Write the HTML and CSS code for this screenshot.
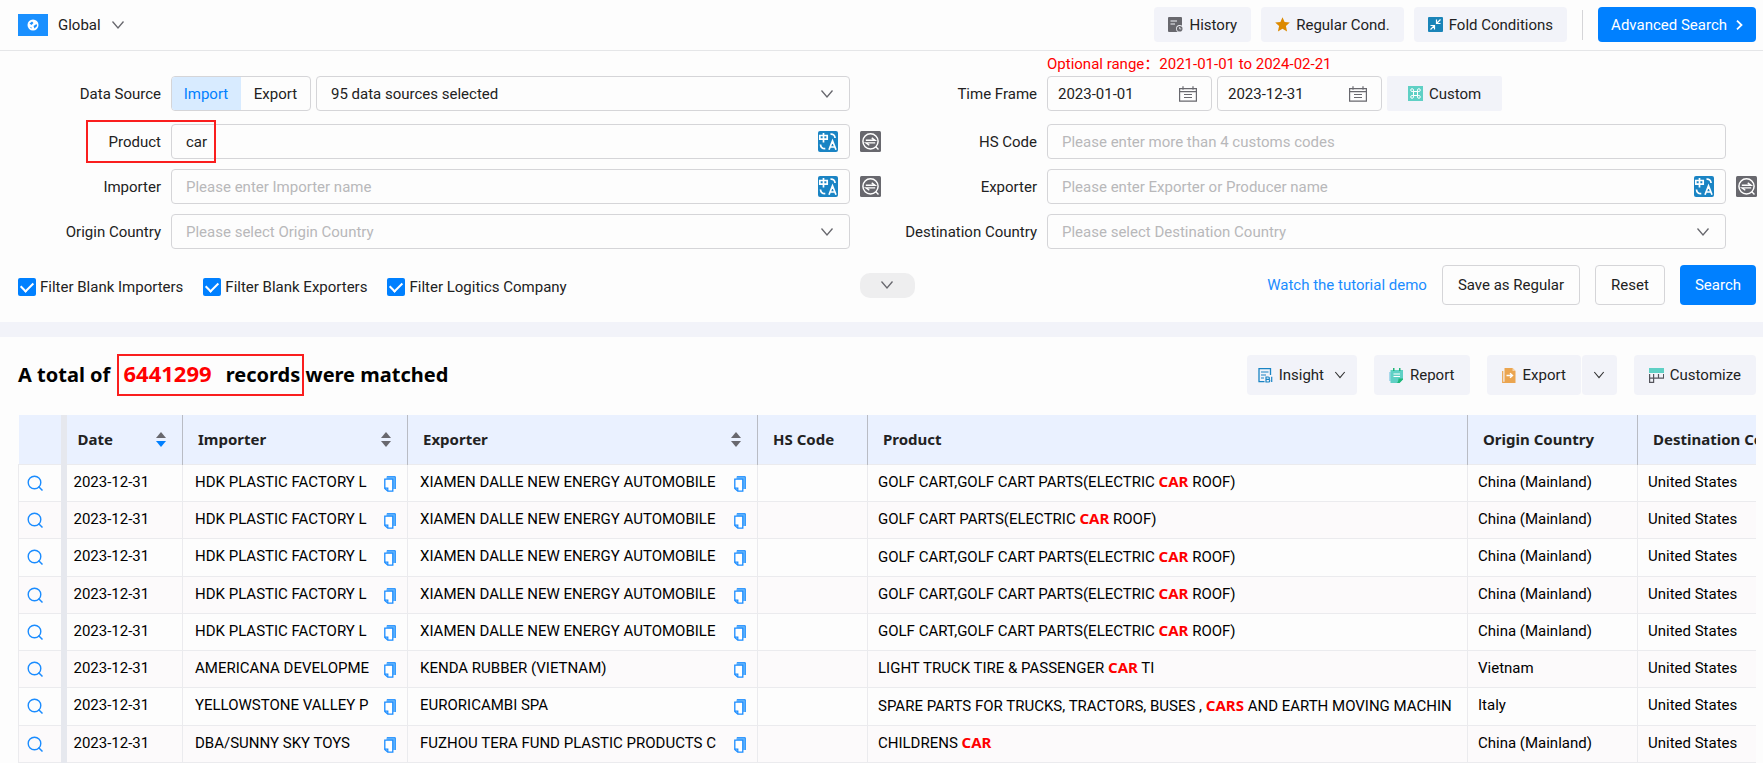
FILE: index.html
```html
<!DOCTYPE html>
<html lang="en">
<head>
<meta charset="utf-8">
<title>Trade records search</title>
<link rel="stylesheet" href="styles.css">
</head>
<body>
<svg class="defs" aria-hidden="true">
  <symbol id="i-chev" viewBox="0 0 14 14"><path d="M1.500 3.500 7 10l5.500-6.500" fill="none" stroke="currentColor" stroke-width="1.300"/></symbol>
  <symbol id="i-trans" viewBox="0 0 20 21"><rect width="20" height="21" rx="2" fill="#1a84c4"/><path d="M1.800 4.500h7.400v3.700H1.800zM5.500 2v9.500M12.500 3.200c2.500-.3 4.300 1 4.600 3.800M2.500 13.500c.2 3 2 4.300 4.800 4.200M11 18.800l3.500-9 3.500 9M12.300 16h4.500" fill="none" stroke="#fff" stroke-width="1.700"/></symbol>
  <symbol id="i-zoom" viewBox="0 0 21 21"><rect width="21" height="21" rx="1.500" fill="#68686e"/><circle cx="10.500" cy="10.300" r="7.600" fill="none" stroke="#fff" stroke-width="1.500"/><path d="M15.800 15.800l2.700 2.700M5.800 9.300H15L11.700 6.900M15.200 11.900H6l3.300 2.400" fill="none" stroke="#fff" stroke-width="1.400"/></symbol>
  <symbol id="i-cal" viewBox="0 0 18 16"><path d="M.6 2.600h16.800v12.500H.6zM.6 5.600h16.800M4 .2v3.500M14 .2v3.500M5 8.500h8M5 11.500h8" fill="none" stroke="#68686e" stroke-width="1.200"/></symbol>
  <symbol id="i-search" viewBox="0 0 16 16"><circle cx="7.500" cy="7.500" r="6.300" fill="none" stroke="#1a8cff" stroke-width="1.400"/><path d="M11.500 11.500l4 4" stroke="#1a8cff" stroke-width="1.500"/></symbol>
  <symbol id="i-copy" viewBox="0 0 12 16"><path d="M2.500 .5h9v12.500h-2.500V3h-6.500z" fill="#6cb8fa"/><path d="M3 .7h8.300v12.300" fill="none" stroke="#1a8cff" stroke-width="1"/><path d="M.8 3.200h8v12H3.800L.8 12.500z" fill="#fff" stroke="#1a8cff" stroke-width="1.300"/><path d="M.8 12.200h3v2.800" fill="none" stroke="#1a8cff" stroke-width="1.200"/></symbol>
  <symbol id="i-sort" viewBox="0 0 10 15"><path d="M0 6l5-6 5 6z" fill="#68686e"/><path d="M0 9l5 6 5-6z" fill="currentColor"/></symbol>
</svg>
<header class="topbar">
  <button class="region"><svg class="flag" viewBox="0 0 30 22"><rect width="30" height="22" fill="#1a90ff"/><circle cx="15" cy="11" r="5.500" fill="#fff"/><path d="M11.500 9.500l2.500-2 1.500 1.500-2 2zM15.500 12l3-2 .6 2-2.600 2.500zM12 13l1.500.3v1.500z" fill="#1a90ff"/></svg>Global<svg class="chev"><use href="#i-chev"/></svg></button>
  <div class="tools">
    <button class="soft"><svg class="ico" viewBox="0 0 15 15"><rect width="14" height="15" rx="1" fill="#68686e"/><path d="M2.500 4h6.500M2.500 7h4.500" stroke="#f2f3f9" stroke-width="1.200"/><circle cx="11.700" cy="11.700" r="3.600" fill="#f2f3f9"/><circle cx="11.700" cy="11.700" r="2.800" fill="#68686e"/><path d="M11.700 10v1.900h1.600" fill="none" stroke="#f2f3f9" stroke-width=".8"/></svg>History</button>
    <button class="soft"><svg class="ico" viewBox="0 0 15 15"><path d="M7.500.2l2.100 4.700 5.200.5-3.900 3.500 1.200 5.600-4.600-2.700-4.600 2.700 1.200-5.600L.2 5.400l5.200-.5z" fill="#dd8a00"/></svg>Regular Cond.</button>
    <button class="soft"><svg class="ico" viewBox="0 0 15 15"><rect width="15" height="15" rx="1" fill="#1a84b8"/><path d="M12.500 2.500 9 6M8.500 2.500v4h4M2.500 12.500 6 9M2.500 8.500h4v4" fill="none" stroke="#fff" stroke-width="1.200"/></svg>Fold Conditions</button>
    <span class="rule"></span>
    <button class="solid">Advanced Search<svg class="right" viewBox="0 0 7 10"><path d="M1 .7 5.500 5 1 9.300" fill="none" stroke="#fff" stroke-width="1.800"/></svg></button>
  </div>
</header>
<form class="filters">
  <div class="grid">
    <div class="field">
      <span class="label">Data Source</span>
      <div class="control split">
        <div class="toggle"><button type="button" class="on">Import</button><button type="button">Export</button></div>
        <div class="box grow"><select aria-label="Sources"><option>95 data sources selected</option></select><svg class="chev"><use href="#i-chev"/></svg></div>
      </div>
    </div>
    <div class="field">
      <label class="label" for="from">Time Frame</label>
      <div class="control split dates">
        <p class="range">Optional range：2021-01-01 to 2024-02-21</p>
        <div class="box date"><input id="from" value="2023-01-01"><svg class="cal"><use href="#i-cal"/></svg></div>
        <div class="box date"><input aria-label="End date" value="2023-12-31"><svg class="cal"><use href="#i-cal"/></svg></div>
        <button type="button" class="soft custom"><svg class="ico" viewBox="0 0 15 15"><rect width="15" height="15" fill="#5fd0c5"/><path d="M5.500 5.500h4v4h-4zM5.500 5.500h-1.400a1.400 1.400 0 1 1 1.400-1.400zM9.500 5.500V4.100a1.400 1.400 0 1 1 1.400 1.400zM9.500 9.500h1.400a1.400 1.400 0 1 1-1.400 1.400zM5.500 9.500v1.400a1.400 1.400 0 1 1-1.400-1.400z" fill="none" stroke="#fff"/></svg>Custom</button>
      </div>
    </div>
    <div class="field">
      <label class="label" for="product">Product</label>
      <div class="box control"><input id="product" value="car"><svg class="trans"><use href="#i-trans"/></svg></div>
      <button type="button" class="lens" aria-label="Match mode"><svg><use href="#i-zoom"/></svg></button>
      <span class="mark"></span>
    </div>
    <div class="field">
      <label class="label" for="hs">HS Code</label>
      <div class="box control"><input id="hs" placeholder="Please enter more than 4 customs codes"></div>
    </div>
    <div class="field">
      <label class="label" for="importer">Importer</label>
      <div class="box control"><input id="importer" placeholder="Please enter Importer name"><svg class="trans"><use href="#i-trans"/></svg></div>
      <button type="button" class="lens" aria-label="Match mode"><svg><use href="#i-zoom"/></svg></button>
    </div>
    <div class="field">
      <label class="label" for="exporter">Exporter</label>
      <div class="box control"><input id="exporter" placeholder="Please enter Exporter or Producer name"><svg class="trans"><use href="#i-trans"/></svg></div>
      <button type="button" class="lens" aria-label="Match mode"><svg><use href="#i-zoom"/></svg></button>
    </div>
    <div class="field">
      <label class="label" for="origin">Origin Country</label>
      <div class="box control"><select id="origin" class="empty"><option>Please select Origin Country</option></select><svg class="chev"><use href="#i-chev"/></svg></div>
    </div>
    <div class="field">
      <label class="label" for="dest">Destination Country</label>
      <div class="box control"><select id="dest" class="empty"><option>Please select Destination Country</option></select><svg class="chev"><use href="#i-chev"/></svg></div>
    </div>
  </div>
  <div class="actions">
    <div class="checks">
      <label><input type="checkbox" checked>Filter Blank Importers</label>
      <label><input type="checkbox" checked>Filter Blank Exporters</label>
      <label><input type="checkbox" checked>Filter Logitics Company</label>
    </div>
    <button type="button" class="more" aria-label="More conditions"><svg class="chev"><use href="#i-chev"/></svg></button>
    <div class="submit">
      <a href="#">Watch the tutorial demo</a>
      <button type="button" class="line">Save as Regular</button>
      <button type="button" class="line">Reset</button>
      <button type="button" class="solid">Search</button>
    </div>
  </div>
</form>
<main class="results">
  <div class="summary">
    <h1>A total of <span class="hit"><em>6441299</em> records</span> were matched</h1>
    <div class="exports">
      <button class="soft insight"><svg class="ico" viewBox="0 0 15 15"><path d="M12.500 7V.7H1v13h5.500" fill="none" stroke="#1a84c4" stroke-width="1.300"/><path d="M3 4h7.500M3 7h5M3 10h3" stroke="#1a84c4" stroke-width="1.200"/><path d="M8 9h2.200c1.600 0 1.600 2.300 0 2.300H8zm0 2.300h2.500c1.700 0 1.700 2.700 0 2.700H8zM13.700 8.700V14" fill="none" stroke="#1a84c4" stroke-width="1.200"/></svg>Insight<svg class="tiny"><use href="#i-chev"/></svg></button>
      <button class="soft"><svg class="ico" viewBox="0 0 15 15"><path d="M0 4h3v9H0z" fill="#a9d8ec"/><path d="M1.500 2h12.500v9l-3.500 4h-9z" fill="#5fd0c5"/><path d="M14 10.500v1L10.500 15H7.500c2 0 2-4.500 2-4.500zM4 0h1.500v3H4zM10 0h1.500v3H10z" fill="#1fb87a"/><path d="M4.500 6h6.500M4.500 8.500h6.500" stroke="#fff" stroke-width="1.200"/></svg>Report</button>
      <div class="pair"><button class="soft"><svg class="ico" viewBox="0 0 15 15"><path d="M2.500 0h8l3 3v12h-11z" fill="#eba550"/><path d="M10.500 0l3 3h-3z" fill="#f8d3a4"/><path d="M.7 3v11.400h10" fill="none" stroke="#eba550" stroke-width="1.200"/><path d="M4.500 7.500h5.500M8 5.300l2.500 2.200L8 9.700" fill="none" stroke="#fff" stroke-width="1.400"/></svg>Export</button><button class="soft drop" aria-label="Export options"><svg class="tiny"><use href="#i-chev"/></svg></button></div>
      <button class="soft"><svg class="ico" viewBox="0 0 15 15"><rect width="15" height="5" fill="#5fd0c5"/><path d="M.6 6v8.400h4V6M.6 10.200h14V6M9.500 6v4.200" fill="none" stroke="#55555d" stroke-width="1.200"/></svg>Customize</button>
    </div>
  </div>
  <div class="tablewrap">
    <table>
      <colgroup><col class="c1"><col class="c2"><col class="c3"><col class="c4"><col class="c5"><col class="c6"><col class="c7"><col class="c8"></colgroup>
      <thead><tr><th class="pin"></th><th>Date<svg class="sort active"><use href="#i-sort"/></svg></th><th>Importer<svg class="sort"><use href="#i-sort"/></svg></th><th>Exporter<svg class="sort"><use href="#i-sort"/></svg></th><th>HS Code</th><th>Product</th><th>Origin Country</th><th>Destination Country</th></tr></thead>
      <tbody id="rows"></tbody>
    </table>
  </div>
</main>
<script src="rows.js"></script>
</body>
</html>
```
FILE: styles.css
```css
* { box-sizing: border-box; }
body { margin: 0; background: #fdfdfd; color: #222; font: 15px/20px Roboto, "Noto Sans CJK SC", sans-serif; overflow: hidden; }
button, input, select { font: inherit; color: inherit; margin: 0; }
button { display: flex; align-items: center; justify-content: center; border: 0; background: none; padding: 0; white-space: nowrap; }
svg { display: block; flex: none; }
.defs { position: absolute; width: 0; height: 0; }
.chev { width: 14px; height: 14px; color: #68686e; }
.ico { width: 15px; height: 15px; margin-right: 6px; }

.topbar { display: flex; justify-content: space-between; align-items: center; height: 51px; padding: 0 7px 1px 18px; border-bottom: 1px solid #e5e6e8; }
.flag { width: 30px; height: 22px; margin-right: 10px; }
.region .chev { margin-left: 10px; }
.tools { display: flex; align-items: center; gap: 10px; }
.soft { height: 35px; padding: 0 14px; border-radius: 4px; background: #f2f3f9; }
.solid { height: 35px; padding: 0 15px; border-radius: 4px; background: #0080ff; color: #fff; }
.tools .solid { padding: 0 13px; }
.rule { width: 1px; height: 30px; margin: 0 5px; background: #d5d5d8; }
.right { width: 7px; height: 10px; margin-left: 9px; }

.filters { padding: 25px 7px 17px 18px; border-bottom: 15px solid #f2f3f9; }
.grid { display: grid; grid-template-columns: 1fr 1fr; column-gap: 14px; row-gap: 10px; }
.field { position: relative; display: flex; align-items: center; height: 35px; }
.field:nth-child(-n+2) { margin-bottom: 3px; }
.label { width: 143px; flex: none; text-align: right; }
.control { margin-left: 10px; flex: 1; margin-right: 30px; }
.lens { flex: none; margin-left: -20px; margin-right: -1px; }
.lens svg { width: 21px; height: 21px; }
.box { display: flex; align-items: center; height: 35px; border: 1px solid #d5d5d8; border-radius: 4px; padding: 0 15px 0 14px; }
.box input, .box select { flex: 1; width: 100%; min-width: 0; border: 0; padding: 0; background: none; outline: 0; appearance: none; }
.box ::placeholder, .box .empty { color: #b8b8ba; opacity: 1; }
.trans { width: 20px; height: 21px; margin-right: -4px; }
.split { display: flex; gap: 5px; }
.toggle { display: flex; height: 35px; border: 1px solid #d5d5d8; border-radius: 4px; overflow: hidden; }
.toggle button { width: 69px; }
.toggle .on { width: 70px; margin: -1px 0 -1px -1px; background: #d8ebff; color: #0080ff; }
.grow { flex: 1; }
.date { width: 165px; padding: 0 14px 0 10px; }
.cal { width: 18px; height: 16px; }
.custom { width: 115px; border-radius: 2px; }
.range { position: absolute; top: -22px; margin: 0; color: #f00; }
.mark { position: absolute; left: 68px; top: -4px; width: 130px; height: 43px; border: 2px solid #fa1e1e; pointer-events: none; }

.actions { display: grid; grid-template-columns: 1fr auto 1fr; align-items: center; margin-top: 16px; }
.checks { display: flex; gap: 20px; padding-top: 3px; }
.checks label { display: flex; align-items: center; white-space: nowrap; }
.checks input { appearance: none; width: 18px; height: 18px; margin-right: 4px; border-radius: 2px; background: #0080ff; display: grid; place-items: center; }
.checks input::after { content: ""; width: 6px; height: 10px; border: solid #fff; border-width: 0 2px 2px 0; transform: rotate(45deg) translate(-1px, -1px); }
.more { width: 55px; height: 25px; border-radius: 10px; background: #eeeeef; }
.submit { display: flex; justify-content: flex-end; align-items: center; gap: 15px; }
.submit a { color: #1a8cff; text-decoration: none; white-space: nowrap; }
.submit button { height: 40px; }
.line { padding: 0 15px; border: 1px solid #d5d5d8; border-radius: 4px; }

.results { padding: 18px 7px 0 18px; }
.summary { display: flex; justify-content: space-between; align-items: center; height: 40px; margin-bottom: 20px; }
h1, th, td b { font-family: "Noto Sans", sans-serif; font-weight: 700; }
h1 { margin: 0; font-size: 20px; line-height: 28px; color: #000; white-space: nowrap; }
.hit { position: relative; display: inline-block; margin-left: 8px; }
.hit::after { content: ""; position: absolute; inset: -7px -4px -7px -6px; border: 2px solid #fa1e1e; }
.hit em { font-style: normal; font-size: 22px; line-height: 20px; color: #f00; margin-right: 9px; }
.exports { display: flex; gap: 17px; }
.exports .soft { height: 40px; padding: 0 15px; }
.exports .insight { padding: 0 11px; }
.tiny { width: 12px; height: 12px; margin-left: 10px; color: #333; }
.pair { display: flex; gap: 1px; }
.exports .drop { width: 35px; padding: 0; }
.drop .tiny { margin: 0; }

.tablewrap { overflow: hidden; }
table { table-layout: fixed; width: 1855px; border-collapse: collapse; }
.c1 { width: 45px; } .c2 { width: 119px; } .c3 { width: 225px; } .c4 { width: 350px; } .c5 { width: 110px; } .c6 { width: 600px; } .c7 { width: 170px; } .c8 { width: 236px; }
th { position: relative; height: 49px; padding: 0 15px; background: #eaf1ff; text-align: left; border-right: 1px solid #b9bcc4; white-space: nowrap; }
td { position: relative; height: 37px; padding: 0 10px 2px; border: 1px solid #ebebee; white-space: nowrap; color: #000; }
tr:nth-child(3) td, tr:nth-child(7) td { height: 38px; }
th:nth-child(2) { padding-left: 11px; }
td:nth-child(2) { padding-left: 7px; }
td:nth-child(3), td:nth-child(4) { padding-left: 12px; }
tbody tr:nth-child(even) { background: #fcfafb; }
.sort { position: absolute; right: 16px; top: 17px; width: 10px; height: 15px; color: #68686e; }
.active { color: #0080ff; }
th.pin, td.pin { border-right: 6px solid #e6e8ee; }
td b { color: #f00; }
td.pin { padding: 0 8px; }
td.pin svg { width: 16px; height: 16px; }
.copy { position: absolute; right: 11px; top: 11px; width: 12px; height: 16px; }
```
FILE: rows.js
```js
const golf = "GOLF CART,GOLF CART PARTS(ELECTRIC <b>CAR</b> ROOF)";
const hdk = ["HDK PLASTIC FACTORY L", "XIAMEN DALLE NEW ENERGY AUTOMOBILE"];
const china = "China (Mainland)";
const rows = [
  [...hdk, golf, china],
  [...hdk, "GOLF CART PARTS(ELECTRIC <b>CAR</b> ROOF)", china],
  [...hdk, golf, china],
  [...hdk, golf, china],
  [...hdk, golf, china],
  ["AMERICANA DEVELOPME", "KENDA RUBBER (VIETNAM)", "LIGHT TRUCK TIRE &amp; PASSENGER <b>CAR</b> TI", "Vietnam"],
  ["YELLOWSTONE VALLEY P", "EURORICAMBI SPA", "SPARE PARTS FOR TRUCKS, TRACTORS, BUSES , <b>CARS</b> AND EARTH MOVING MACHIN", "Italy"],
  ["DBA/SUNNY SKY TOYS", "FUZHOU TERA FUND PLASTIC PRODUCTS C", "CHILDRENS <b>CAR</b>", china]
];
const copy = '<svg class="copy"><use href="#i-copy"/></svg>';
document.getElementById("rows").innerHTML = rows.map(([imp, exp, product, origin]) =>
  `<tr><td class="pin"><svg><use href="#i-search"/></svg></td><td>2023-12-31</td><td>${imp}${copy}</td><td>${exp}${copy}</td><td></td><td>${product}</td><td>${origin}</td><td>United States</td></tr>`
).join("");
```
